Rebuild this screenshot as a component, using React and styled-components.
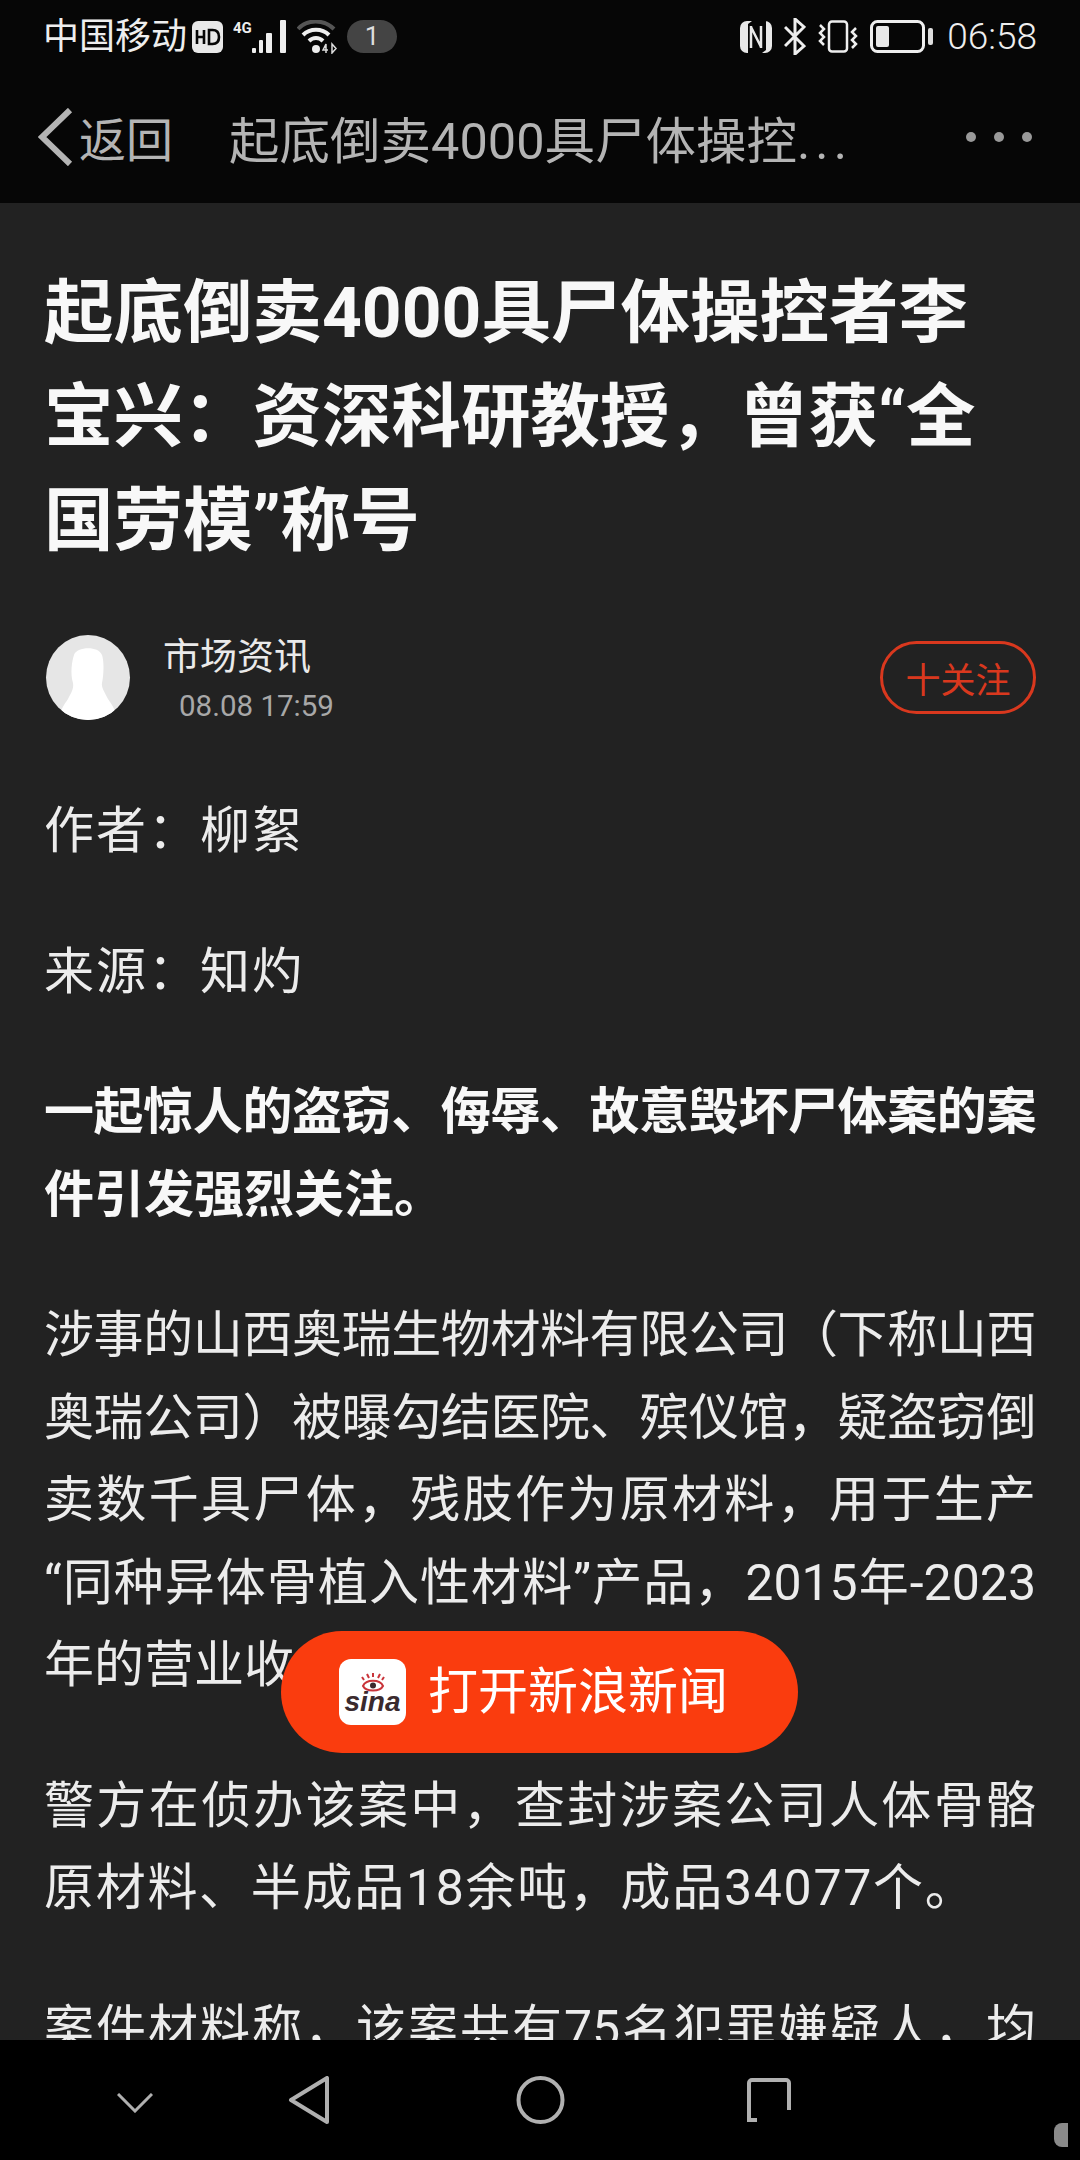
import React from 'react';
import styled, { createGlobalStyle } from 'styled-components';

const GlobalStyle = createGlobalStyle`
  html, body {
    margin: 0;
    padding: 0;
    background: #000;
  }
  * {
    box-sizing: border-box;
  }
`;

const Phone = styled.div`
  position: relative;
  width: 1080px;
  height: 2160px;
  display: flex;
  flex-direction: column;
  overflow: hidden;
  background: #222;
  font-family: Roboto, "Noto Sans CJK SC", sans-serif;
`;

const Top = styled.div`
  flex: none;
  height: 203px;
  background: #060606;
`;

const StatusBar = styled.div`
  height: 73px;
  padding: 0 43px 0 43px;
  display: flex;
  align-items: center;
  justify-content: space-between;
  color: #eee;
`;

const StatusGroup = styled.div`
  display: flex;
  align-items: center;
  gap: ${(props) => props.$gap || 10}px;
`;

const Carrier = styled.span`
  font-size: 36px;
  line-height: 40px;
  margin-right: -5px;
`;

const Pill = styled.span`
  width: 50px;
  height: 33px;
  border-radius: 17px;
  background: #444;
  color: #ddd;
  font-size: 26px;
  line-height: 33px;
  text-align: center;
`;

const Clock = styled.span`
  font-weight: 300;
  font-size: 37px;
  line-height: 40px;
  margin-left: 2px;
`;

const NavBar = styled.div`
  height: 127px;
  padding: 0 48px 0 38px;
  display: flex;
  align-items: center;
  color: #b4b4b4;
  font-size: 50.5px;
`;

const Back = styled.div`
  display: flex;
  align-items: center;
  gap: 6px;
  width: 191px;
  flex: none;
  font-size: 47px;
`;

const NavTitle = styled.div`
  flex: 1;
  white-space: nowrap;
`;

const Ellipsis = styled.span`
  letter-spacing: 5px;
`;

const Dots = styled.div`
  display: flex;
  gap: 18px;
`;

const Dot = styled.i`
  width: 10px;
  height: 10px;
  border-radius: 50%;
  background: #999;
`;

const Article = styled.main`
  flex: 1;
  min-height: 0;
  overflow: hidden;
  padding: 59px 44px 0;
`;

const Title = styled.h1`
  margin: 0;
  max-width: 980px;
  font-size: 69.5px;
  line-height: 104px;
  font-weight: 700;
  color: #f8f8f8;
`;

const AuthorRow = styled.div`
  margin-top: 61px;
  display: flex;
  align-items: center;
  height: 85px;
`;

const Avatar = styled.div`
  width: 84px;
  height: 85px;
  flex: none;
  margin-left: 2px;
  border-radius: 50%;
  overflow: hidden;
  background: #e6e6e6;
`;

const AuthorText = styled.div`
  flex: 1;
  margin-left: 33px;
  padding-top: 4px;
  display: flex;
  flex-direction: column;
  gap: 8px;
`;

const AuthorName = styled.div`
  font-size: 37px;
  line-height: 44px;
  color: #eaeaea;
`;

const PostTime = styled.div`
  padding-left: 16px;
  font-size: 29.5px;
  line-height: 36px;
  color: #a8a8a8;
`;

const FollowButton = styled.div`
  width: 156px;
  height: 73px;
  border: 3px solid #d9381e;
  border-radius: 37px;
  display: flex;
  align-items: center;
  justify-content: center;
  color: #d9381e;
  font-size: 35px;
`;

const Paragraphs = styled.div`
  margin-top: 70px;
  display: flex;
  flex-direction: column;
  gap: 58px;
`;

const Paragraph = styled.p`
  margin: 0;
  font-size: 50px;
  line-height: 82.500px;
  font-weight: ${(props) => (props.$bold ? 700 : 400)};
  letter-spacing: ${(props) => (props.$loose ? '2px' : '0')};
  color: ${(props) => (props.$bold ? '#f8f8f8' : '#ececec')};
`;

// one printed line; $fill stretches it to the column like the app's justified text
const Line = styled.span`
  display: block;
  white-space: nowrap;
  text-align: ${(props) => (props.$fill ? 'justify' : 'left')};
  text-align-last: ${(props) => (props.$fill ? 'justify' : 'left')};
  text-justify: inter-character;
  letter-spacing: ${(props) => (props.$tight ? '-0.4px' : props.$wide ? '1.7px' : '0')};
`;

const BottomNav = styled.div`
  flex: none;
  height: 120px;
  background: #000;
  position: relative;
  padding: 36px 0 0 117px;
  display: flex;
  align-items: flex-start;
`;

const NavSlot = styled.div`
  margin-left: ${(props) => props.$left}px;
  margin-top: ${(props) => props.$top || 0}px;
  line-height: 0;
`;

const OpenApp = styled.div`
  position: absolute;
  left: 281px;
  top: 1631px;
  width: 517px;
  height: 122px;
  border-radius: 61px;
  background: #fa3c0e;
  display: flex;
  align-items: center;
  padding-left: 58px;
  gap: 22px;
`;

const AppIcon = styled.div`
  width: 67px;
  height: 66px;
  border-radius: 12px;
  background: #fff;
  display: flex;
  flex-direction: column;
  align-items: center;
  justify-content: center;
  line-height: 0;
`;

const SinaWord = styled.span`
  font-family: "Liberation Sans", sans-serif;
  font-style: italic;
  font-weight: 700;
  font-size: 28px;
  line-height: 20px;
  color: #3a2a2e;
`;

const OpenText = styled.span`
  font-size: 50px;
  line-height: 60px;
  color: #fff;
  white-space: nowrap;
`;

const Scratch = styled.div`
  position: absolute;
  left: 1054px;
  top: 83px;
  width: 14px;
  height: 24px;
  border-radius: 8px 0 0 8px;
  background: #8a8a8a;
`;

const HdIcon = () => (
  <svg width="31" height="32" viewBox="0 0 31 32">
    <rect width="31" height="32" rx="6" fill="#e8e8e8" />
    <path d="M5 9v14M12 9v14M5 16h7" stroke="#060606" strokeWidth="2.600" fill="none" />
    <path d="M17 9h3.500c4.500 0 6.500 3 6.500 7s-2 7-6.500 7H17z" stroke="#060606" strokeWidth="2.600" fill="none" />
  </svg>
);

const SignalIcon = () => (
  <svg width="54" height="34" viewBox="0 0 54 34">
    <text x="0" y="13" fill="#eee" fontFamily="Roboto, sans-serif" fontSize="15" fontWeight="700">4G</text>
    <g fill="#eee">
      <rect x="19" y="28" width="4" height="5" rx="1" />
      <rect x="26" y="20" width="4" height="13" rx="1" />
      <rect x="33" y="13" width="6" height="20" rx="1" />
      <rect x="47" y="0" width="6" height="33" rx="1" />
    </g>
  </svg>
);

const WifiIcon = () => (
  <svg width="40" height="34" viewBox="0 0 40 34" fill="none">
    <path d="M1 9C10 -1 27 -1 37 9" stroke="#555" strokeWidth="4" />
    <path d="M6 15C13 8 25 8 32 15" stroke="#eee" strokeWidth="4" />
    <path d="M12 21C16 17 22 17 26 21" stroke="#eee" strokeWidth="4" />
    <circle cx="19" cy="29" r="4" fill="#eee" />
    <path d="M29 33v-9l-3 6h5M35 24v9l4-4.500z" stroke="#ddd" strokeWidth="1.500" />
  </svg>
);

const NfcIcon = () => (
  <svg width="32" height="32" viewBox="0 0 32 32">
    <rect width="32" height="32" rx="7" fill="#e8e8e8" />
    <path d="M8 3l4-3h14v29l-4 3H8z" fill="#060606" />
    <path d="M11 5v22M21 5v22M11 6l10 20" stroke="#e8e8e8" strokeWidth="2.500" fill="none" />
  </svg>
);

const BluetoothIcon = () => (
  <svg width="22" height="37" viewBox="0 0 22 37" fill="none" stroke="#eee" strokeWidth="3">
    <path d="M1 9l19 19-9 8V1l9 8L1 28" />
  </svg>
);

const VibrateIcon = () => (
  <svg width="40" height="33" viewBox="0 0 40 33" fill="none" stroke="#eee" strokeWidth="2.500">
    <rect x="11" y="1.500" width="18" height="30" rx="3" />
    <path d="M2 5l4 4-4 4 4 4-4 4 4 4" />
    <path d="M38 8l-4 4 4 4-4 4 4 4-4 4" />
  </svg>
);

const BatteryIcon = () => (
  <svg width="63" height="33" viewBox="0 0 63 33">
    <rect x="1.500" y="1.500" width="52" height="30" rx="6" fill="none" stroke="#eee" strokeWidth="3" />
    <rect x="6" y="6" width="13" height="21" rx="2" fill="#e8e8e8" />
    <rect x="58" y="8" width="5" height="17" rx="2" fill="#ddd" />
  </svg>
);

const BackChevron = () => (
  <svg width="35" height="58" viewBox="0 0 35 58" fill="none" stroke="#b4b4b4" strokeWidth="6">
    <path d="M32 2L4 29l28 27" />
  </svg>
);

const AvatarFigure = () => (
  <svg width="84" height="85" viewBox="0 0 84 85">
    <path d="M28 20c2-8 24-10 28 0 2 6 2 18 0 28-1 4 3 10 6 16 4 6 8 10 8 21H14c0-11 4-15 8-21 3-6 6-10 5-16-3-10-1-22 1-28z" fill="#fff" />
  </svg>
);

const SinaEye = () => (
  <svg width="26" height="19" viewBox="0 0 26 19" fill="none">
    <path d="M3 13C6 6 20 6 23 13C20 19 6 19 3 13Z" stroke="#c9343a" strokeWidth="2" />
    <circle cx="13" cy="12.500" r="3" fill="#3a2a2e" />
    <path d="M4 7L2 4M9 5L7 1M13 4V0M18 5L20 1M22 7L24 4" stroke="#c9343a" strokeWidth="2" />
  </svg>
);

const App = () => (
  <Phone>
    <GlobalStyle />
    <Top>
      <StatusBar>
        <StatusGroup $gap={10}>
          <Carrier>中国移动</Carrier>
          <HdIcon />
          <SignalIcon />
          <WifiIcon />
          <Pill>1</Pill>
        </StatusGroup>
        <StatusGroup $gap={12}>
          <NfcIcon />
          <BluetoothIcon />
          <VibrateIcon />
          <BatteryIcon />
          <Clock>06:58</Clock>
        </StatusGroup>
      </StatusBar>
      <NavBar>
        <Back>
          <BackChevron />
          <span>返回</span>
        </Back>
        <NavTitle>起底倒卖4000具尸体操控<Ellipsis>...</Ellipsis></NavTitle>
        <Dots>
          <Dot />
          <Dot />
          <Dot />
        </Dots>
      </NavBar>
    </Top>

    <Article>
      <Title>起底倒卖4000具尸体操控者李宝兴：资深科研教授，曾获“全国劳模”称号</Title>
      <AuthorRow>
        <Avatar>
          <AvatarFigure />
        </Avatar>
        <AuthorText>
          <AuthorName>市场资讯</AuthorName>
          <PostTime>08.08 17:59</PostTime>
        </AuthorText>
        <FollowButton>十关注</FollowButton>
      </AuthorRow>
      <Paragraphs>
        <Paragraph $loose>作者：柳絮</Paragraph>
        <Paragraph $loose>来源：知灼</Paragraph>
        <Paragraph $bold>
          <Line $fill $tight>一起惊人的盗窃、侮辱、故意毁坏尸体案的案</Line>
          <Line>件引发强烈关注。</Line>
        </Paragraph>
        <Paragraph>
          <Line $fill $tight>涉事的山西奥瑞生物材料有限公司（下称山西</Line>
          <Line $fill $tight>奥瑞公司）被曝勾结医院、殡仪馆，疑盗窃倒</Line>
          <Line $fill>卖数千具尸体，残肢作为原材料，用于生产</Line>
          <Line $fill>“同种异体骨植入性材料”产品，2015年-2023</Line>
          <Line>年的营业收入</Line>
        </Paragraph>
        <Paragraph>
          <Line $fill>警方在侦办该案中，查封涉案公司人体骨骼</Line>
          <Line $wide>原材料、半成品18余吨，成品34077个。</Line>
        </Paragraph>
        <Paragraph>
          <Line $fill>案件材料称，该案共有75名犯罪嫌疑人，均</Line>
        </Paragraph>
      </Paragraphs>
    </Article>

    <BottomNav>
      <NavSlot $top={17}>
        <svg width="36" height="20" viewBox="0 0 36 20" fill="none" stroke="#b0b0b0" strokeWidth="3">
          <path d="M1 1l17 17L35 1" />
        </svg>
      </NavSlot>
      <NavSlot $left={135}>
        <svg width="41" height="48" viewBox="0 0 41 48" fill="none" stroke="#b0b0b0" strokeWidth="4" strokeLinejoin="round">
          <path d="M39 2v44L3 24z" />
        </svg>
      </NavSlot>
      <NavSlot $left={187}>
        <svg width="49" height="48" viewBox="0 0 49 48" fill="none" stroke="#b0b0b0" strokeWidth="4">
          <circle cx="24.500" cy="24" r="22" />
        </svg>
      </NavSlot>
      <NavSlot $left={182} $top={2}>
        <svg width="44" height="44" viewBox="0 0 44 44" fill="none" stroke="#b0b0b0" strokeWidth="4">
          <path d="M2 42V5a3 3 0 0 1 3-3h34a3 3 0 0 1 3 3v27" />
          <path d="M2 31v11h8" />
        </svg>
      </NavSlot>
      <Scratch />
    </BottomNav>

    <OpenApp>
      <AppIcon>
        <SinaEye />
        <SinaWord>sina</SinaWord>
      </AppIcon>
      <OpenText>打开新浪新闻</OpenText>
    </OpenApp>
  </Phone>
);

export default App;
